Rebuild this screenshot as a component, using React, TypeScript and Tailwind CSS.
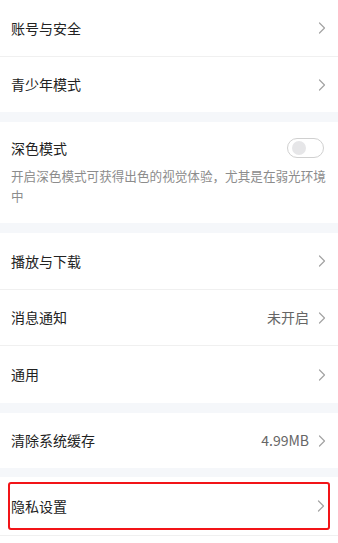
import { useState } from "react";

const Chevron = () => (
  <svg width="8" height="12" viewBox="0 0 8 12" className="shrink-0">
    <path d="M1.5 1 L6.5 6 L1.5 11" fill="none" stroke="#a3a3a3" strokeWidth="1.2" strokeLinecap="round" strokeLinejoin="round" />
  </svg>
);

const Row = ({ label, value, h = "h-[56px]" }: { label: string; value?: string; h?: string }) => (
  <div className={`${h} flex items-center justify-between pl-[11px] pr-[12px] bg-white`}>
    <span className="text-[14px] text-[#222]">{label}</span>
    <div className="flex items-center gap-[9px]">
      {value && <span className="text-[14px] text-[#666]">{value}</span>}
      <Chevron />
    </div>
  </div>
);

const Gap = ({ h = "h-[10px]" }: { h?: string }) => <div className={`${h} bg-[#f5f7fa]`} />;

export default function App() {
  const [dark, setDark] = useState(false);

  return (
    <div
      className="w-[338px] h-[543px] bg-white overflow-hidden"
      style={{ fontFamily: '"Noto Sans CJK SC", "Noto Sans", sans-serif' }}
    >
      <Row label="账号与安全" />
      <div className="h-px bg-[#f0f0f0]" />
      <Row label="青少年模式" h="h-[55px]" />
      <Gap />

      <div className="h-[101px] bg-white pl-[11px] pt-[15px]">
        <div className="flex items-center justify-between pr-[14px]">
          <span className="text-[14px] text-[#222] leading-[22px]">深色模式</span>
          <button
            onClick={() => setDark(!dark)}
            className="w-[37px] h-[20px] rounded-full border border-[#d0d0d0] bg-white flex items-center px-[4px]"
          >
            <span className="w-[14px] h-[14px] rounded-full bg-[#e6e6e8]" />
          </button>
        </div>
        <p className="mt-[7px] text-[12.6px] leading-[20px] text-[#8c8c8c]">
          <span className="whitespace-nowrap">开启深色模式可获得出色的视觉体验，尤其是在弱光环境</span>
          <br />
          中
        </p>
      </div>
      <Gap />

      <Row label="播放与下载" />
      <div className="h-px bg-[#f0f0f0]" />
      <Row label="消息通知" value="未开启" h="h-[55px]" />
      <div className="h-px bg-[#f0f0f0]" />
      <Row label="通用" h="h-[57px]" />
      <Gap />

      <Row label="清除系统缓存" value="4.99MB" h="h-[55px]" />
      <Gap h="h-[9px]" />

      <div className="h-[58px] bg-white px-[8px] py-[5px]">
        <div className="h-full border-2 border-[#f21418] rounded-[3px] flex items-center justify-between pl-[1px] pr-[3px]">
          <span className="text-[14px] text-[#222]">隐私设置</span>
          <Chevron />
        </div>
      </div>
      <div className="h-px bg-[#f0f0f0]" />
    </div>
  );
}
